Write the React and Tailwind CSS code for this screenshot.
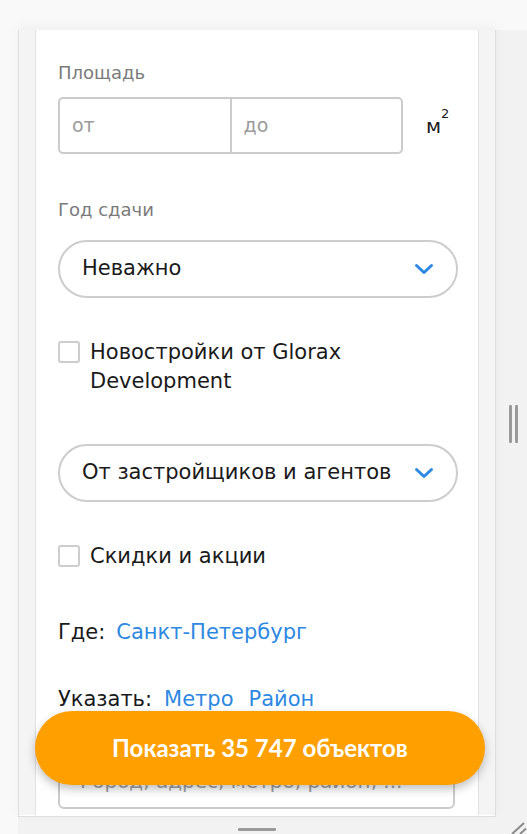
import React from "react";

const Chevron = () => (
  <svg width="20" height="12" viewBox="0 0 20 12" fill="none">
    <path d="M2.5 2.5 L10 9.5 L17.5 2.5" stroke="#2d88e2" strokeWidth="3" strokeLinecap="round" strokeLinejoin="round" />
  </svg>
);

export default function App() {
  const font = { fontFamily: '"DejaVu Sans", "Noto Sans", sans-serif' };
  return (
    <div className="w-[527px] h-[834px] bg-[#f9f9f9] overflow-hidden flex flex-col pt-[30px] pl-[18px]" style={font}>
      <div className="relative flex-1 bg-[#f2f2f2]">
        <div className="relative w-[478px] h-[787px] bg-white border border-[#dedede] border-t-0 flex shadow-[0_-4px_10px_rgba(0,0,0,0.04)] overflow-hidden">
          <div className="w-[17px] bg-[#f4f4f4] border-r border-[#e2e2e2] h-[785px]"></div>
          <div className="flex-1 flex flex-col pl-[22px] pr-[18px]">
            <div className="mt-[31px] text-[18px] leading-[24px] text-[#7b7b7b]">Площадь</div>
            <div className="mt-[12px] flex items-center">
              <div className="flex w-[345px] h-[57px] border-2 border-[#cbcbcb] rounded-[5px]">
                <div className="flex-1 flex items-center pl-[12px] text-[19px] text-[#9b9b9b] border-r-2 border-[#cbcbcb]">от</div>
                <div className="flex-1 flex items-center pl-[12px] text-[19px] text-[#9b9b9b]">до</div>
              </div>
              <div className="ml-[23px] text-[20px] text-[#1a1a1a] leading-none">
                м<sup className="text-[13px] align-super">2</sup>
              </div>
            </div>
            <div className="mt-[44px] text-[18px] leading-[24px] text-[#7b7b7b]">Год сдачи</div>
            <div className="mt-[18px] h-[58px] w-[400px] border-2 border-[#cdcdcd] rounded-full flex items-center justify-between pl-[22px] pr-[22px]">
              <span className="text-[21px] text-[#1a1a1a]">Неважно</span>
              <Chevron />
            </div>
            <div className="mt-[40px] flex items-start">
              <div className="mt-[3px] w-[22px] h-[22px] border-2 border-[#cdcdcd] rounded-[3px] shrink-0"></div>
              <div className="ml-[10px] text-[21px] leading-[29px] text-[#1a1a1a]">
                Новостройки от Glorax
                <br />
                Development
              </div>
            </div>
            <div className="mt-[48px] h-[58px] w-[400px] border-2 border-[#cdcdcd] rounded-full flex items-center justify-between pl-[22px] pr-[22px]">
              <span className="text-[21px] text-[#1a1a1a] whitespace-nowrap">От застройщиков и агентов</span>
              <Chevron />
            </div>
            <div className="mt-[40px] flex items-start">
              <div className="mt-[3px] w-[22px] h-[22px] border-2 border-[#cdcdcd] rounded-[3px] shrink-0"></div>
              <div className="ml-[10px] text-[21px] leading-[29px] text-[#1a1a1a]">Скидки и акции</div>
            </div>
            <div className="mt-[47px] flex text-[21px] leading-[29px]">
              <span className="text-[#1a1a1a]">Где:</span>
              <span className="ml-[11px] text-[#2d88e2]">Санкт-Петербург</span>
            </div>
            <div className="mt-[38px] flex text-[21px] leading-[29px]">
              <span className="text-[#1a1a1a]">Указать:</span>
              <span className="ml-[12px] text-[#2d88e2]">Метро</span>
              <span className="ml-[15px] text-[#2d88e2]">Район</span>
            </div>
            <div className="mt-[38px] h-[57px] w-[397px] border-2 border-[#cbcbcb] rounded-[6px] flex items-center pl-[20px] text-[20px] text-[#a0a0a0] whitespace-nowrap overflow-hidden">
              Город, адрес, метро, район, ...
            </div>
          </div>
          <div className="w-[17px] bg-[#f4f4f4] border-l border-[#e2e2e2] h-[785px]"></div>
          <div
            className="absolute left-[16px] top-[681px] w-[450px] h-[74px] rounded-full bg-[#ff9f00] flex items-center justify-center shadow-[0_4px_10px_rgba(0,0,0,0.25)] text-white text-[24px] font-bold"
            style={{ fontFamily: 'Lato, "Noto Sans", sans-serif' }}
          >
            Показать 35 747 объектов
          </div>
        </div>
        <div className="absolute left-[491px] top-[375px] flex gap-[3px]">
          <div className="w-[3px] h-[38px] bg-[#9a9a9a] rounded-[1px]"></div>
          <div className="w-[3px] h-[38px] bg-[#9a9a9a] rounded-[1px]"></div>
        </div>
        <div className="absolute left-[220px] top-[798px] w-[38px] h-[3px] bg-[#9a9a9a] rounded-[1px]"></div>
        <svg className="absolute left-[490px] top-[792px]" width="19" height="12" viewBox="0 0 19 12">
          <path d="M4 12 L16 1" stroke="#8a8a8a" strokeWidth="2" />
          <path d="M12 12 L18 6.5" stroke="#8a8a8a" strokeWidth="2" />
        </svg>
      </div>
    </div>
  );
}
